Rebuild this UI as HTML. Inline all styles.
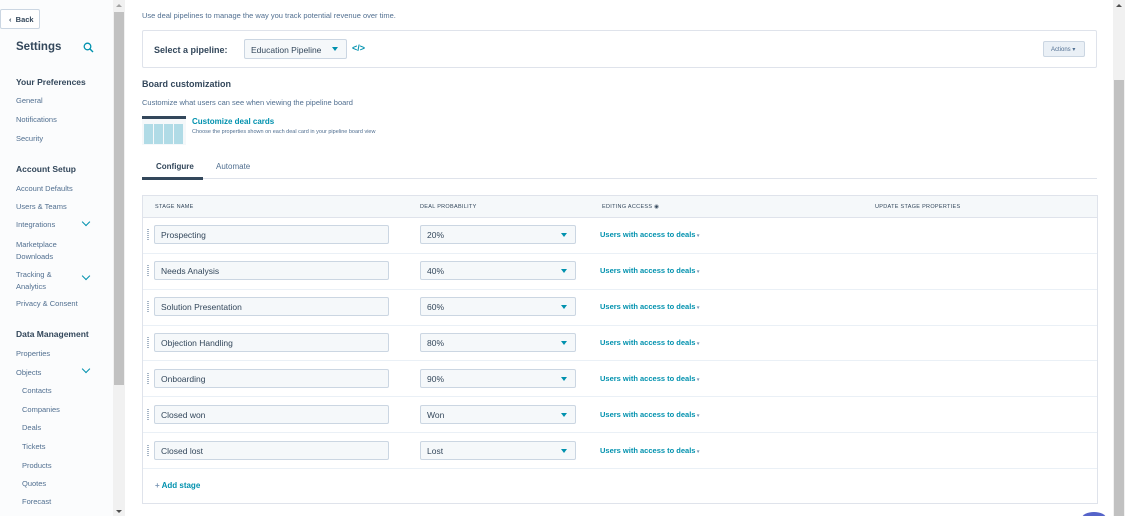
<!DOCTYPE html>
<html><head><style>
*{box-sizing:border-box;margin:0;padding:0}
html,body{width:1125px;height:516px;overflow:hidden}
body{background:#fff;font-family:"Liberation Sans",sans-serif;color:#33475b;position:relative}
.a{position:absolute}
.side{left:0;top:0;width:113px;height:516px;background:#fbfcfd}
.nav{position:absolute;left:16px;font-size:7.5px;color:#516f90}
.sec{position:absolute;left:16px;font-size:8.5px;font-weight:bold;color:#33475b}
.chev{position:absolute;left:83px;width:6px;height:6px;border-right:1.5px solid #0091ae;border-bottom:1.5px solid #0091ae;transform:rotate(45deg)}
.inp{position:absolute;left:154px;width:235px;height:19px;border:1px solid #cbd6e2;background:#f5f8fa;border-radius:2px;font-size:8.5px;padding:4px 6px;color:#33475b}
.sel{position:absolute;left:420px;width:156px;height:19px;border:1px solid #cbd6e2;background:#f5f8fa;border-radius:2px;font-size:8.5px;padding:4px 6px;color:#33475b}
.sel:after{content:"";position:absolute;right:8px;top:7px;border-left:3.5px solid transparent;border-right:3.5px solid transparent;border-top:4px solid #0091ae}
.acc{position:absolute;left:600px;font-size:7.5px;font-weight:bold;color:#0091ae}
.acc:after{content:" ▾";color:#7c98b6;font-size:5px}
.grip{position:absolute;left:147px;width:2px;height:11px;background:repeating-linear-gradient(180deg,#a6b5c6 0 1px,transparent 1px 2px)}
.line{position:absolute;left:143px;width:954px;height:1px;background:#eaf0f6}
</style></head><body>
<div class="a side"></div>
<div class="a" style="left:0;top:9px;width:40px;height:20px;border:1px solid #cbd6e2;background:#fff;border-radius:2px;font-size:7.5px;font-weight:bold;padding:5px 0 0 8px">‹&nbsp; Back</div>
<div class="a" style="left:16px;top:41px;font-size:11.5px;font-weight:bold">Settings</div>
<svg class="a" style="left:83px;top:42px" width="11" height="11" viewBox="0 0 11 11"><circle cx="4.5" cy="4.5" r="3.3" fill="none" stroke="#0091ae" stroke-width="1.3"/><line x1="7" y1="7" x2="10" y2="10" stroke="#0091ae" stroke-width="1.4"/></svg>
<div class="sec" style="top:77px">Your Preferences</div>
<div class="nav" style="top:96px">General</div>
<div class="nav" style="top:115px">Notifications</div>
<div class="nav" style="top:134px">Security</div>
<div class="sec" style="top:164px">Account Setup</div>
<div class="nav" style="top:184px">Account Defaults</div>
<div class="nav" style="top:202px">Users &amp; Teams</div>
<div class="nav" style="top:220px">Integrations</div><div class="chev" style="top:219px"></div>
<div class="nav" style="top:239px;line-height:12px">Marketplace<br>Downloads</div>
<div class="nav" style="top:269px;line-height:12px">Tracking &amp;<br>Analytics</div><div class="chev" style="top:273px"></div>
<div class="nav" style="top:299px">Privacy &amp; Consent</div>
<div class="sec" style="top:329px">Data Management</div>
<div class="nav" style="top:349px">Properties</div>
<div class="nav" style="top:368px">Objects</div><div class="chev" style="top:366px"></div>
<div class="nav" style="top:386px;left:22px">Contacts</div>
<div class="nav" style="top:405px;left:22px">Companies</div>
<div class="nav" style="top:423px;left:22px">Deals</div>
<div class="nav" style="top:442px;left:22px">Tickets</div>
<div class="nav" style="top:461px;left:22px">Products</div>
<div class="nav" style="top:479px;left:22px">Quotes</div>
<div class="nav" style="top:497px;left:22px">Forecast</div>
<div class="a" style="left:113px;top:0;width:12px;height:516px;background:#f1f1f1"></div>
<div class="a" style="left:114px;top:12px;width:10px;height:373px;background:#c1c1c1"></div>
<div class="a" style="left:116px;top:4px;border-left:3px solid transparent;border-right:3px solid transparent;border-bottom:3px solid #a3a3a3"></div>
<div class="a" style="left:116px;top:510px;border-left:3px solid transparent;border-right:3px solid transparent;border-top:3px solid #505050"></div>
<div class="a" style="left:1113px;top:0;width:12px;height:516px;background:#f1f1f1"></div>
<div class="a" style="left:1114px;top:80px;width:10px;height:436px;background:#c1c1c1"></div>
<div class="a" style="left:1116px;top:4px;border-left:3px solid transparent;border-right:3px solid transparent;border-bottom:3px solid #505050"></div>

<div class="a" style="left:142px;top:11px;font-size:7.5px;color:#516f90">Use deal pipelines to manage the way you track potential revenue over time.</div>
<div class="a" style="left:142px;top:30px;width:955px;height:38px;border:1px solid #dfe3eb;border-radius:2px"></div>
<div class="a" style="left:154px;top:45px;font-size:9px;font-weight:bold">Select a pipeline:</div>
<div class="a" style="left:244px;top:39px;width:103px;height:20px;border:1px solid #cbd6e2;background:#f5f8fa;border-radius:2px;font-size:8.5px;padding:5px 6px">Education Pipeline</div>
<div class="a" style="left:332px;top:47px;border-left:3.5px solid transparent;border-right:3.5px solid transparent;border-top:4px solid #0091ae"></div>
<div class="a" style="left:352px;top:43px;font-size:9px;font-weight:bold;color:#0091ae">&lt;/&gt;</div>
<div class="a" style="left:1043px;top:41px;width:42px;height:16px;border:1px solid #cbd6e2;background:#eaf0f6;border-radius:2px;font-size:6px;color:#506e91;padding:4px 0 0 7px">Actions ▾</div>
<div class="a" style="left:142px;top:79px;font-size:9px;font-weight:bold">Board customization</div>
<div class="a" style="left:142px;top:98px;font-size:7.5px;color:#516f90">Customize what users can see when viewing the pipeline board</div>
<div class="a" style="left:142px;top:116px;width:44px;height:29px;background:#f5f8fa;border-top:3px solid #33475b">
<div class="a" style="left:2px;top:5px;width:40px;height:20px;background:repeating-linear-gradient(90deg,#b0dbe6 0 9px,#f5f8fa 9px 10px)"></div></div>
<div class="a" style="left:192px;top:117px;font-size:8px;font-weight:bold;color:#0091ae">Customize deal cards</div>
<div class="a" style="left:192px;top:129px;font-size:5.5px;color:#516f90">Choose the properties shown on each deal card in your pipeline board view</div>
<div class="a" style="left:156px;top:162px;font-size:8px;font-weight:bold">Configure</div>
<div class="a" style="left:216px;top:162px;font-size:8px;color:#516f90">Automate</div>
<div class="a" style="left:142px;top:178px;width:955px;height:1px;background:#dfe3eb"></div>
<div class="a" style="left:142px;top:177px;width:61px;height:3px;background:#33475b"></div>

<div class="a" style="left:142px;top:195px;width:956px;height:309px;border:1px solid #dfe3eb"></div>
<div class="a" style="left:143px;top:196px;width:954px;height:22px;background:#f5f8fa;border-bottom:1px solid #dfe3eb"></div>
<div class="a" style="left:155px;top:204px;font-size:5.5px;letter-spacing:.3px">STAGE NAME</div>
<div class="a" style="left:420px;top:204px;font-size:5.5px;letter-spacing:.3px">DEAL PROBABILITY</div>
<div class="a" style="left:602px;top:204px;font-size:5.5px;letter-spacing:.3px">EDITING ACCESS ◉</div>
<div class="a" style="left:875px;top:204px;font-size:5.5px;letter-spacing:.3px">UPDATE STAGE PROPERTIES</div>

<div class="line" style="top:253px"></div><div class="line" style="top:289px"></div><div class="line" style="top:325px"></div><div class="line" style="top:360px"></div><div class="line" style="top:396px"></div><div class="line" style="top:432px"></div><div class="line" style="top:468px"></div>

<div class="grip" style="top:229px"></div><div class="inp" style="top:225px">Prospecting</div><div class="sel" style="top:225px">20%</div><div class="acc" style="top:230px">Users with access to deals</div>
<div class="grip" style="top:265px"></div><div class="inp" style="top:261px">Needs Analysis</div><div class="sel" style="top:261px">40%</div><div class="acc" style="top:266px">Users with access to deals</div>
<div class="grip" style="top:301px"></div><div class="inp" style="top:297px">Solution Presentation</div><div class="sel" style="top:297px">60%</div><div class="acc" style="top:302px">Users with access to deals</div>
<div class="grip" style="top:337px"></div><div class="inp" style="top:333px">Objection Handling</div><div class="sel" style="top:333px">80%</div><div class="acc" style="top:338px">Users with access to deals</div>
<div class="grip" style="top:373px"></div><div class="inp" style="top:369px">Onboarding</div><div class="sel" style="top:369px">90%</div><div class="acc" style="top:374px">Users with access to deals</div>
<div class="grip" style="top:409px"></div><div class="inp" style="top:405px">Closed won</div><div class="sel" style="top:405px">Won</div><div class="acc" style="top:410px">Users with access to deals</div>
<div class="grip" style="top:445px"></div><div class="inp" style="top:441px">Closed lost</div><div class="sel" style="top:441px">Lost</div><div class="acc" style="top:446px">Users with access to deals</div>
<div class="a" style="left:155px;top:481px;font-size:8px;font-weight:bold;color:#0091ae"><span style="color:#7c98b6">+</span> Add stage</div>
<div class="a" style="left:1082px;top:512px;width:24px;height:12px;border-radius:50%;background:#5563c9"></div>
</body></html>
